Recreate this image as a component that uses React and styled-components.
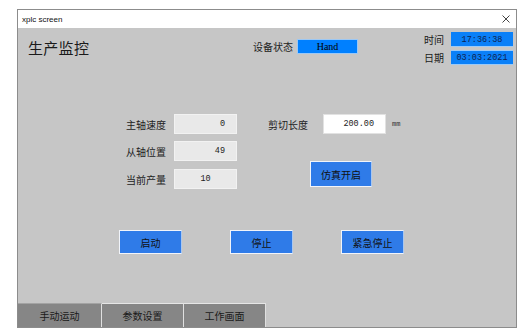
import React from "react";
import styled, { createGlobalStyle } from "styled-components";

const GlobalStyle = createGlobalStyle`
  html, body {
    margin: 0;
    padding: 0;
    background: #ffffff;
  }
  body {
    font-family: "Noto Sans CJK SC", "Noto Sans", sans-serif;
  }
`;

const Window = styled.div`
  box-sizing: border-box;
  width: 500px;
  height: 319px;
  margin: 9px 0 0 17px;
  border: 1px solid #8c8c8c;
  display: flex;
  flex-direction: column;
  background: #c6c6c6;
`;

const TitleBar = styled.div`
  height: 18px;
  background: #ffffff;
  display: flex;
  align-items: center;
  justify-content: space-between;
  padding: 0 6px 0 4px;
  font-family: "Liberation Sans", Arial, sans-serif;
  font-size: 8px;
  color: #111;
`;

const CloseIcon = styled.svg`
  width: 8px;
  height: 8px;
  stroke: #444;
  stroke-width: 1;
`;

const Screen = styled.div`
  flex: 1;
  display: flex;
  flex-direction: column;
`;

const Header = styled.div`
  height: 38px;
  display: flex;
  align-items: flex-start;
  padding: 4px 3px 0 10px;
`;

const PageTitle = styled.h1`
  flex: 1;
  margin: 6px 0 0;
  font-size: 15px;
  font-weight: 400;
  color: #1a1a1a;
  line-height: 20px;
  letter-spacing: 0.3px;
`;

const Status = styled.div`
  display: flex;
  align-items: center;
  gap: 4px;
  margin: 7px 66px 0 0;
  font-size: 10px;
  color: #222;
`;

const HandBox = styled.div`
  box-sizing: border-box;
  width: 61px;
  height: 15px;
  background: #0080ff;
  border: 1px solid #9cc8f5;
  display: flex;
  align-items: center;
  justify-content: center;
  font-family: "Liberation Serif", serif;
  font-size: 10px;
  color: #000;
`;

const Clock = styled.div`
  display: grid;
  grid-template-columns: 20px 62px;
  column-gap: 7px;
  row-gap: 3px;
  align-items: center;
  font-size: 10px;
  color: #1a1a1a;
  white-space: nowrap;
`;

const ClockBox = styled.div`
  box-sizing: border-box;
  height: 15px;
  background: #0a80f8;
  border-top: 1px solid ${(p) => (p.lit ? "#9ccaf6" : "#0a80f8")};
  border-bottom: 1px solid #9ccaf6;
  display: flex;
  align-items: center;
  justify-content: center;
  font-family: "Liberation Mono", monospace;
  font-size: 8.5px;
  color: #0c2350;
`;

const Fields = styled.div`
  display: flex;
  margin-top: 44px;
  padding-left: 108px;
`;

const Column = styled.div`
  display: flex;
  flex-direction: column;
  gap: 7px;
`;

const Row = styled.div`
  display: flex;
  align-items: center;
  height: 20px;
  gap: ${(p) => p.gap || 8}px;
  margin-top: ${(p) => p.shift || 0}px;
  font-size: 10px;
  color: #222;
`;

const Label = styled.span`
  width: 40px;
  white-space: nowrap;
`;

const ValueBox = styled.div`
  box-sizing: border-box;
  width: 63px;
  height: 20px;
  padding: 0 11px;
  display: flex;
  align-items: center;
  justify-content: ${(p) => (p.center ? "center" : "flex-end")};
  background: ${(p) => (p.white ? "#ffffff" : "#e9e9e9")};
  border: 1px solid ${(p) => (p.white ? "#e2e2e2" : "#f2f2f2")};
  font-family: "Liberation Mono", monospace;
  font-size: 8.5px;
  color: #222;
`;

const Unit = styled.span`
  font-family: "Liberation Mono", monospace;
  font-size: 7px;
  color: #333;
`;

const RightColumn = styled.div`
  display: flex;
  flex-direction: column;
  margin-left: 31px;
`;

const BlueButton = styled.button`
  box-sizing: border-box;
  width: ${(p) => p.w || 63}px;
  height: ${(p) => p.h || 24}px;
  margin: 0;
  padding: 0;
  background: #2f7be8;
  border: 1px solid #f1f4fa;
  border-right-color: #a9c7f0;
  font-family: "Noto Sans CJK SC", sans-serif;
  font-size: 10px;
  color: #111;
  cursor: pointer;
`;

const SimButton = styled(BlueButton)`
  margin: 27px 0 0 42px;
`;

const Actions = styled.div`
  display: flex;
  gap: 48px;
  margin-top: 41px;
  padding-left: 101px;
`;

const Spacer = styled.div`
  flex: 1;
`;

const TabBar = styled.div`
  display: flex;
  height: 24px;
`;

const Tab = styled.div`
  box-sizing: border-box;
  width: ${(p) => p.w}px;
  background: #868686;
  border-top: 1px solid ${(p) => (p.lit ? "#e6e6e6" : "#a3a3a3")};
  border-right: 1px solid #e0e0e0;
  display: flex;
  align-items: center;
  justify-content: center;
  font-size: 10px;
  color: #1a1a1a;
`;

export default function App() {
  return (
    <>
      <GlobalStyle />
      <Window>
        <TitleBar>
          <span>xplc screen</span>
          <CloseIcon viewBox="0 0 8 8">
            <path d="M0.5 0.5 L7.5 7.5 M7.5 0.5 L0.5 7.5" />
          </CloseIcon>
        </TitleBar>
        <Screen>
          <Header>
            <PageTitle>生产监控</PageTitle>
            <Status>
              设备状态
              <HandBox>Hand</HandBox>
            </Status>
            <Clock>
              <span>时间</span>
              <ClockBox>17:36:38</ClockBox>
              <span>日期</span>
              <ClockBox lit>03:03:2021</ClockBox>
            </Clock>
          </Header>

          <Fields>
            <Column>
              <Row>
                <Label>主轴速度</Label>
                <ValueBox>0</ValueBox>
              </Row>
              <Row>
                <Label>从轴位置</Label>
                <ValueBox>49</ValueBox>
              </Row>
              <Row shift={1}>
                <Label>当前产量</Label>
                <ValueBox center>10</ValueBox>
              </Row>
            </Column>
            <RightColumn>
              <Row gap={15}>
                <Label>剪切长度</Label>
                <Row gap={6}>
                  <ValueBox white>200.00</ValueBox>
                  <Unit>mm</Unit>
                </Row>
              </Row>
              <SimButton w={62} h={26}>仿真开启</SimButton>
            </RightColumn>
          </Fields>

          <Actions>
            <BlueButton>启动</BlueButton>
            <BlueButton>停止</BlueButton>
            <BlueButton>紧急停止</BlueButton>
          </Actions>

          <Spacer />
          <TabBar>
            <Tab w={84}>手动运动</Tab>
            <Tab w={82} lit>参数设置</Tab>
            <Tab w={82} lit>工作画面</Tab>
          </TabBar>
        </Screen>
      </Window>
    </>
  );
}
